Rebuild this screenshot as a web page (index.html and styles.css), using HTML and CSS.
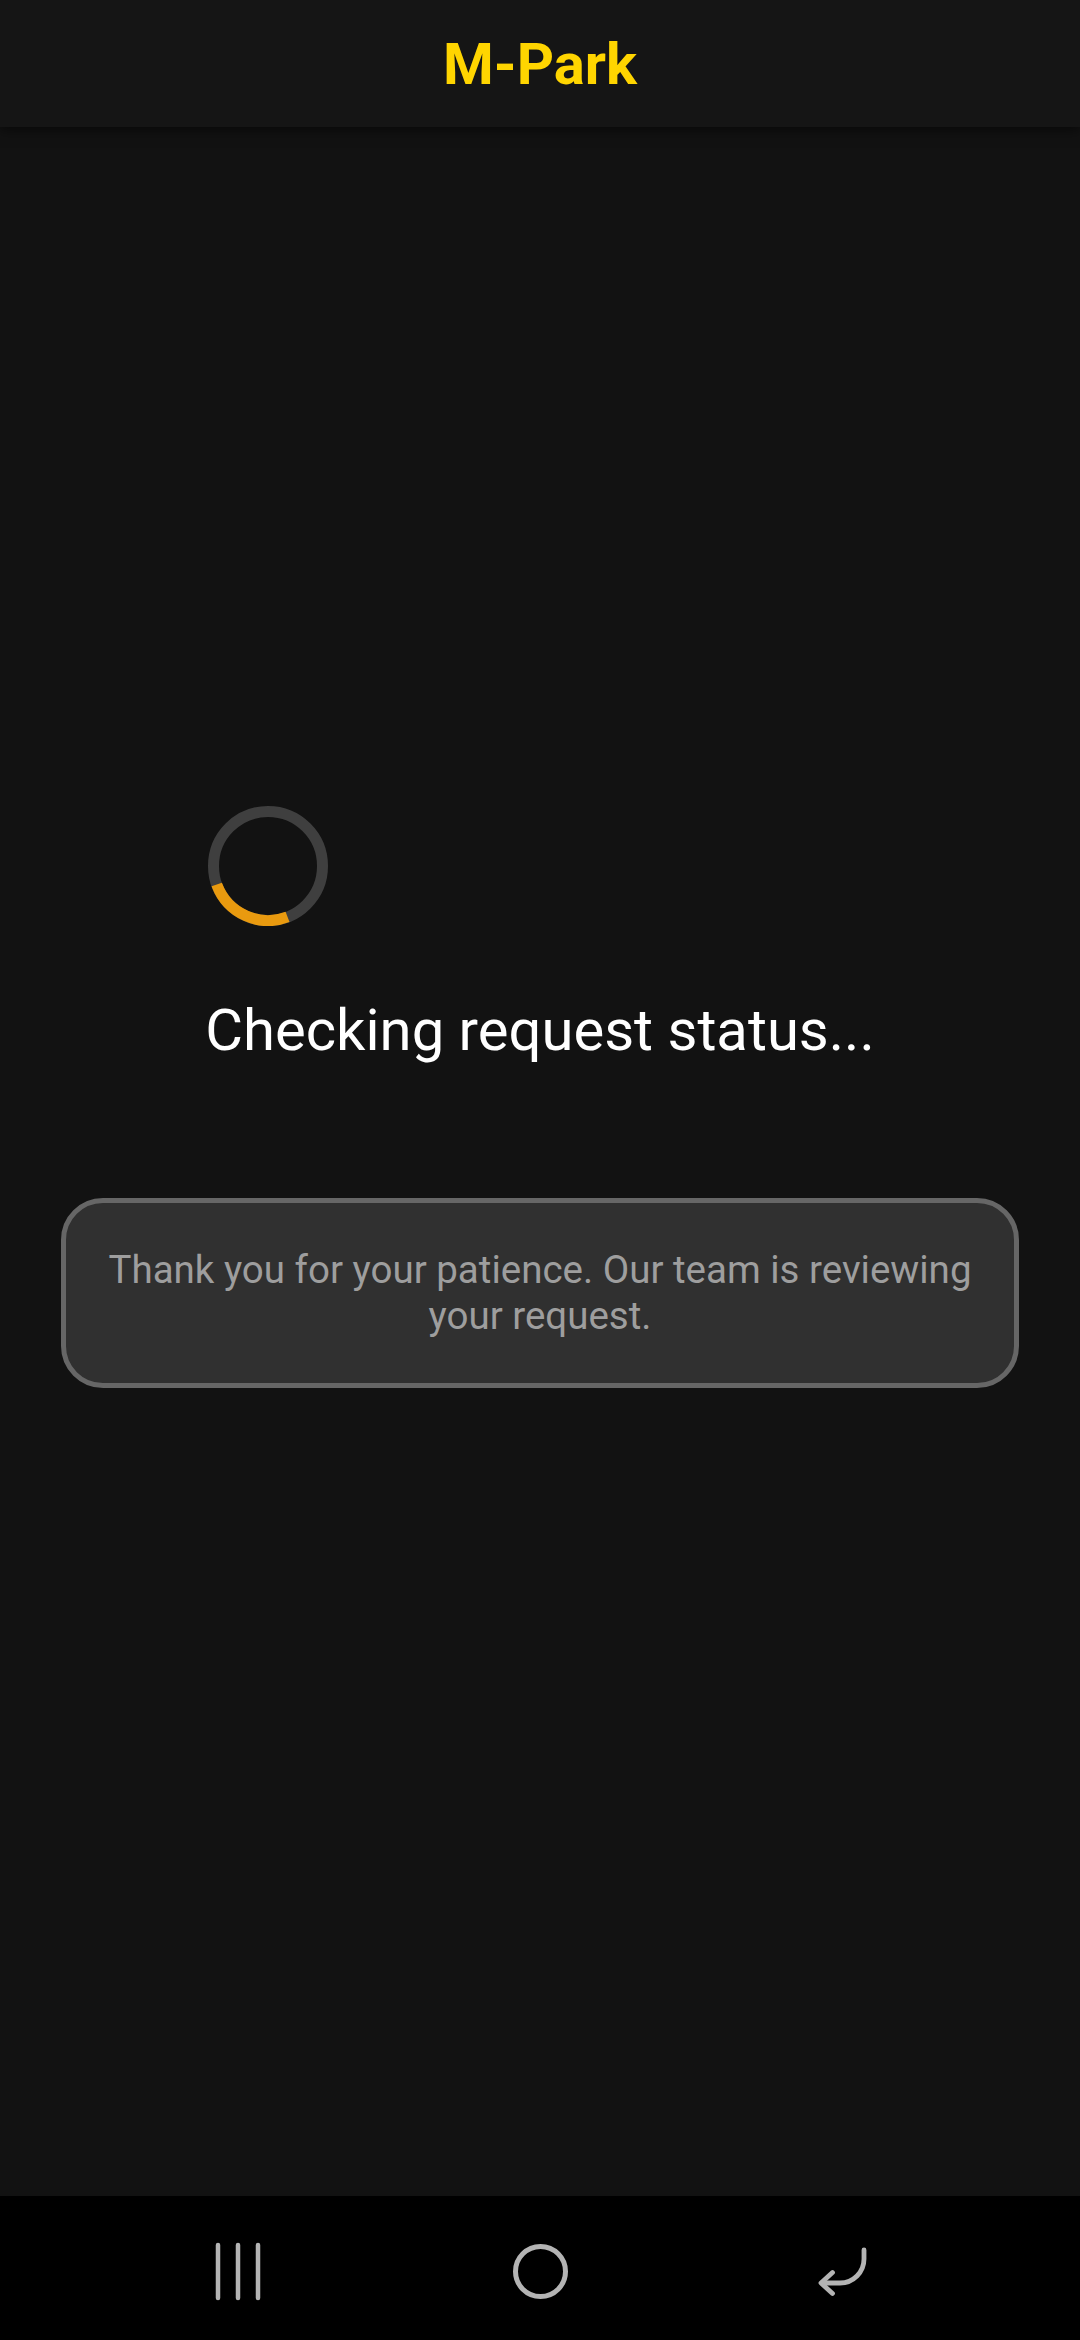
FILE: index.html
```html
<!DOCTYPE html>
<html lang="en">
<head>
<meta charset="utf-8">
<title>M-Park</title>
<link rel="stylesheet" href="styles.css">
</head>
<body>
<div class="screen">
  <header class="appbar">
    <h1 class="title">M-Park</h1>
  </header>
  <main class="content">
    <div class="spinner-row">
      <svg class="spinner" width="120" height="120" viewBox="0 0 120 120">
        <circle cx="60" cy="60" r="54.5" fill="none" stroke="#3f3f3f" stroke-width="11"/>
        <circle cx="60" cy="60" r="54.5" fill="none" stroke="#e99a0f" stroke-width="11" stroke-dasharray="86.6 400" transform="rotate(69 60 60)"/>
      </svg>
    </div>
    <p class="status">Checking request status...</p>
    <div class="notice">
      <p class="notice-text">Thank you for your patience. Our team is reviewing your request.</p>
    </div>
  </main>
  <nav class="navbar">
    <div class="nav-item">
      <svg width="60" height="60" viewBox="0 0 60 60">
        <g stroke="#b4b4b4" stroke-width="4.5" stroke-linecap="round">
          <line x1="10" y1="4" x2="10" y2="57"/>
          <line x1="30" y1="4" x2="30" y2="57"/>
          <line x1="50" y1="4" x2="50" y2="57"/>
        </g>
      </svg>
    </div>
    <div class="nav-item">
      <svg width="60" height="60" viewBox="0 0 60 60">
        <circle cx="30.5" cy="30.5" r="25" fill="none" stroke="#b4b4b4" stroke-width="5"/>
      </svg>
    </div>
    <div class="nav-item">
      <svg width="60" height="60" viewBox="0 0 60 60">
        <g fill="none" stroke="#b4b4b4" stroke-width="4.8" stroke-linecap="round" stroke-linejoin="round">
          <path d="M52 9 V18 A24 24 0 0 1 28 42 H10"/>
          <path d="M20.5 31.5 L9 42 L20.5 52.5"/>
        </g>
      </svg>
    </div>
  </nav>
</div>
</body>
</html>
```

FILE: styles.css
```css
html, body {
  margin: 0;
  padding: 0;
  background: #121212;
}

.screen {
  width: 1080px;
  height: 2340px;
  display: flex;
  flex-direction: column;
  font-family: Roboto, "Noto Sans", sans-serif;
  background: #121212;
}

.appbar {
  height: 127px;
  flex: 0 0 127px;
  background: #151515;
  display: flex;
  align-items: center;
  justify-content: center;
  box-shadow: 0 3px 12px rgba(0, 0, 0, 0.55);
  position: relative;
  z-index: 1;
}

.title {
  margin: 0;
  font-size: 58px;
  line-height: 68px;
  font-weight: 700;
  color: #ffd500;
}

.content {
  flex: 1;
  display: flex;
  flex-direction: column;
  padding-top: 679px;
}

.spinner-row {
  display: flex;
  padding-left: 208px;
}

.spinner {
  display: block;
}

.status {
  margin: 70px 0 0;
  text-align: center;
  font-size: 58px;
  line-height: 68px;
  color: #ffffff;
}

.notice {
  margin: 134px 61px 0;
  background: #303030;
  border: 5px solid #666666;
  border-radius: 42px;
  padding: 44px 28px;
}

.notice-text {
  margin: 0;
  text-align: center;
  font-size: 38.5px;
  line-height: 46px;
  color: #9e9e9e;
}

.navbar {
  height: 144px;
  flex: 0 0 144px;
  background: #000000;
  display: flex;
  justify-content: center;
  align-items: flex-start;
}

.nav-item {
  width: 302px;
  height: 144px;
  display: flex;
  justify-content: center;
  padding-top: 45px;
  box-sizing: border-box;
}

.nav-item svg {
  display: block;
}
```
